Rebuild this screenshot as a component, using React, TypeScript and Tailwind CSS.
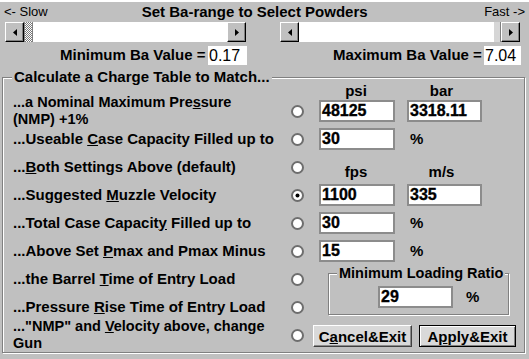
import React from 'react';

const raised =
  'border border-t-white border-l-white border-r-black border-b-black shadow-[inset_-1px_-1px_0_#808080] bg-[#c0c0c0]';

function Arrow({ dir }: { dir: 'left' | 'right' }) {
  return (
    <div className={`w-[19px] h-full flex items-center justify-center shrink-0 ${raised}`}>
      <svg width="4" height="7" viewBox="0 0 4 7">
        <polygon points={dir === 'left' ? '4,0 0,3.5 4,7' : '0,0 4,3.5 0,7'} fill="#000" />
      </svg>
    </div>
  );
}

function Radio({ checked }: { checked?: boolean }) {
  return (
    <svg width="13" height="13" viewBox="0 0 13 13" className="shrink-0">
      <circle cx="6.5" cy="6.5" r="5.5" fill="#fff" stroke="#6e6e6e" strokeWidth="2" />
      {checked && <circle cx="6.5" cy="6.5" r="2" fill="#000" />}
    </svg>
  );
}

function Field({ value, className }: { value: string; className: string }) {
  return (
    <div
      className={`h-[22px] bg-white border-2 border-[#8c8c8c] flex items-center pl-[1px] text-[16px] leading-none [-webkit-text-stroke:0.35px_#000] ${className}`}
    >
      {value}
    </div>
  );
}

function Label({ children, twoLine }: { children: React.ReactNode; twoLine?: boolean }) {
  return (
    <div
      className={
        twoLine
          ? 'w-[278px] shrink-0 text-[14.5px] leading-[16.5px] pb-[1px]'
          : 'w-[278px] shrink-0 leading-[15px] pb-[2px]'
      }
    >
      {children}
    </div>
  );
}

// etched group box, caption sits on the top line
function GroupBox({
  title,
  className,
  titleClass,
  children,
}: {
  title: string;
  className: string;
  titleClass: string;
  children: React.ReactNode;
}) {
  return (
    <div
      className={`relative border border-[#808080] shadow-[inset_1px_1px_0_#fff,1px_1px_0_#fff] ${className}`}
    >
      <span className={`absolute -top-[8px] px-[2px] leading-[14px] bg-[#c0c0c0] whitespace-nowrap ${titleClass}`}>
        {title}
      </span>
      {children}
    </div>
  );
}

function App() {
  return (
    <div className="w-[529px] h-[359px] bg-[#c0c0c0] border-t-2 border-white overflow-hidden text-black font-['Liberation_Sans',Arial,sans-serif]">
      {/* title row */}
      <div className="flex items-center h-[20px] pl-[4px] pr-[4px]">
        <span className="text-[13px]">&lt;- Slow</span>
        <span className="ml-[94px] text-[15px] font-bold">Set Ba-range to Select Powders</span>
        <span className="ml-auto text-[13px]">Fast -&gt;</span>
      </div>

      {/* scrollbars */}
      <div className="flex h-[20px]">
        <div className="ml-[5px] w-[241px] flex bg-white">
          <Arrow dir="left" />
          <div className="w-[9px] h-full border-x border-[#808080] bg-[image:repeating-conic-gradient(#7a7a7a_0%_25%,#ffffff_0%_50%)] bg-[length:2px_2px]" />
          <div className="flex-1" />
          <Arrow dir="right" />
        </div>
        <div className="ml-[34px] w-[240px] flex bg-white">
          <Arrow dir="left" />
          <div className="flex-1" />
          <div className="w-[8px] h-full border-l border-white border-r border-r-[#808080] bg-[#d6d6d6]" />
          <Arrow dir="right" />
        </div>
      </div>

      {/* min / max */}
      <div className="flex items-center h-[19px] mt-[4px] text-[15px] font-bold">
        <span className="ml-[60px] w-[148px]">Minimum Ba Value =</span>
        <div className="w-[39px] h-full bg-white flex items-center pl-[1px] text-[16px] font-normal">0.17</div>
        <span className="ml-[86px] w-[151px]">Maximum Ba Value =</span>
        <div className="w-[37px] h-full bg-white flex items-center pl-[1px] text-[16px] font-normal">7.04</div>
      </div>

      {/* main group */}
      <GroupBox
        title="Calculate a Charge Table to Match..."
        className="mt-[12px] ml-[2px] w-[523px] h-[276px] pl-[10px] pt-[6px] text-[15px] font-bold"
        titleClass="left-[9px]"
      >
        <div className="flex h-[13px] leading-[13px]">
          <div className="ml-[305px] w-[76px] text-center">psi</div>
          <div className="ml-[10px] w-[75px] text-center">bar</div>
        </div>

        <div className="flex items-center h-[28px]">
          <Label twoLine>
            ...a Nominal Maximum Pre<u>s</u>sure
            <br />
            (NMP) +1%
          </Label>
          <Radio />
          <Field value="48125" className="ml-[15px] w-[76px]" />
          <Field value="3318.11" className="ml-[12px] w-[75px]" />
        </div>

        <div className="flex items-center h-[28px]">
          <Label>
            ...Useable <u>C</u>ase Capacity Filled up to
          </Label>
          <Radio />
          <Field value="30" className="ml-[15px] w-[76px]" />
          <span className="ml-[15px]">%</span>
        </div>

        <div className="flex items-center h-[28px]">
          <Label>
            ...<u>B</u>oth Settings Above (default)
          </Label>
          <Radio />
          <div className="self-end mb-[2px] flex h-[14px] leading-[14px]">
            <div className="ml-[14px] w-[76px] text-center">fps</div>
            <div className="ml-[10px] w-[75px] text-center">m/s</div>
          </div>
        </div>

        <div className="flex items-center h-[28px]">
          <Label>
            ...Suggested <u>M</u>uzzle Velocity
          </Label>
          <Radio checked />
          <Field value="1100" className="ml-[15px] w-[76px]" />
          <Field value="335" className="ml-[12px] w-[75px]" />
        </div>

        <div className="flex items-center h-[28px]">
          <Label>
            ...Total Case Capacit<u>y</u> Filled up to
          </Label>
          <Radio />
          <Field value="30" className="ml-[15px] w-[76px]" />
          <span className="ml-[15px]">%</span>
        </div>

        <div className="flex items-center h-[28px]">
          <Label>
            ...Above Set <u>P</u>max and Pmax Minus
          </Label>
          <Radio />
          <Field value="15" className="ml-[15px] w-[76px]" />
          <span className="ml-[15px]">%</span>
        </div>

        <div className="flex">
          <div className="flex flex-col">
            <div className="flex items-center h-[28px]">
              <Label>
                ...the Barrel <u>T</u>ime of Entry Load
              </Label>
              <Radio />
            </div>
            <div className="flex items-center h-[28px]">
              <Label>
                ...Pressure <u>R</u>ise Time of Entry Load
              </Label>
              <Radio />
            </div>
            <div className="flex items-center h-[28px]">
              <Label twoLine>
                ..."NMP" and <u>V</u>elocity above, change
                <br />
                Gun
              </Label>
              <Radio />
            </div>
          </div>

          <div className="flex flex-col">
            <GroupBox
              title="Minimum Loading Ratio"
              className="mt-[8px] ml-[24px] w-[181px] h-[42px] pl-[49px] pt-[12px]"
              titleClass="left-[8px] text-[14.5px]"
            >
              <div className="flex items-center">
                <Field value="29" className="w-[75px]" />
                <span className="ml-[13px]">%</span>
              </div>
            </GroupBox>
            <div className="flex mt-[10px] ml-[9px]">
              <button className="w-[99px] h-[22px] bg-[#d9d9d9] border border-t-white border-l-white border-r-[#404040] border-b-[#404040] shadow-[inset_-1px_-1px_0_#8a8a8a] text-[15px] font-bold leading-none">
                C<u>a</u>ncel&amp;Exit
              </button>
              <button className="ml-[7px] w-[97px] h-[22px] bg-[#d9d9d9] border border-black shadow-[inset_1px_1px_0_#fff,inset_-1px_-1px_0_#808080] text-[15px] font-bold leading-none">
                A<u>p</u>ply&amp;Exit
              </button>
            </div>
          </div>
        </div>
      </GroupBox>
    </div>
  );
}

export default App;
